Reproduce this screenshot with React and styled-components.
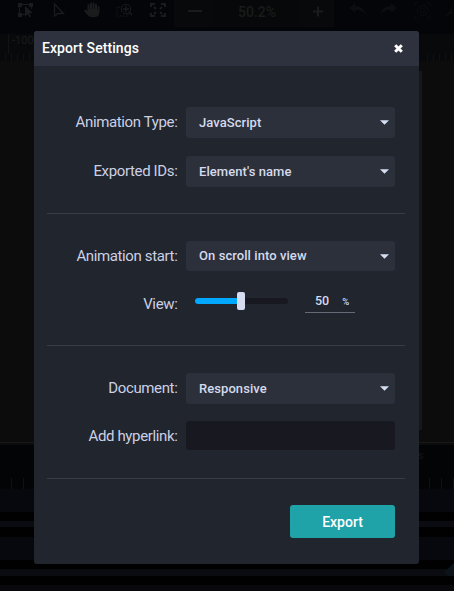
import React from "react";
import styled, { createGlobalStyle } from "styled-components";

const GlobalStyle = createGlobalStyle`
  * { box-sizing: border-box; }
  body { margin: 0; background: #000; font-family: Roboto, sans-serif; overflow: hidden; }
`;

const Screen = styled.div`
  position: relative;
  width: 454px;
  height: 591px;
  overflow: hidden;
  display: flex;
  flex-direction: column;
`;

const Toolbar = styled.div`
  height: 34px;
  flex: none;
  display: grid;
  grid-template-columns: 42px 33px 33px 33px 33px 38px 88px 34px 43px 22px 46px 9px;
  background: #040508;
  color: #1a1b1c;
`;

const Tool = styled.div`
  display: flex;
  justify-content: center;
  height: 27px;
  padding-top: ${(p) => p.$top ?? 2}px;
  padding-left: ${(p) => p.$left ?? 0}px;
  background: ${(p) => (p.$filled ? "#08090b" : "transparent")};
  color: ${(p) => (p.$faint ? "#0c0d0f" : "inherit")};
  svg { flex: none; }
`;

const ZoomValue = styled.div`
  height: 27px;
  padding-left: 26px;
  background: #070809;
  font-size: 14px;
  font-weight: 500;
  line-height: 24px;
`;

const Ruler = styled.div`
  height: 27px;
  flex: none;
  display: flex;
  justify-content: space-between;
  background: #08090b;
  color: #1a1b1d;
`;

const RulerStart = styled.div`
  width: 34px;
  height: 27px;
`;

const RulerValue = styled.div`
  height: 20px;
  margin-left: 8px;
  padding-left: 3px;
  border-left: 1px solid #121315;
  font-size: 11px;
  line-height: 14px;
`;

const Ticks = styled.div`
  width: ${(p) => p.$width}px;
  height: ${(p) => p.$height}px;
  margin-top: ${(p) => p.$top}px;
  background: repeating-linear-gradient(90deg, transparent 0 ${(p) => p.$step - 1}px, #101113 ${(p) => p.$step - 1}px ${(p) => p.$step}px);
`;

const Canvas = styled.div`
  height: 381px;
  flex: none;
  background: #0c0c0c;
  padding-top: 10px;
`;

const Artboard = styled.div`
  width: 388px;
  height: 359px;
  margin-left: 34px;
  background: #171717;
`;

const Timeline = styled.div`
  height: 47px;
  flex: none;
  display: flex;
  justify-content: space-between;
  border-top: 1px solid #181818;
  background: #030406;
  box-shadow: inset 0 2px #0b0c0c;
`;

const Seconds = styled.div`
  width: 36px;
  padding-top: 6px;
  color: #141517;
  font-size: 11px;
  line-height: 13px;
`;

const Track = styled.div`
  height: ${(p) => p.$height}px;
  flex: none;
  background: ${(p) => p.$color};
`;

const LastTrack = styled(Track)`
  display: flex;
  justify-content: flex-end;
  svg { margin-top: -6px; flex: none; }
`;

const Dialog = styled.section`
  position: absolute;
  left: 34px;
  top: 31px;
  width: 385px;
  height: 533px;
  border-radius: 3px;
  overflow: hidden;
  background: #21252d;
  color: #d5daed;
`;

const Header = styled.header`
  height: 35px;
  display: flex;
  align-items: center;
  justify-content: space-between;
  padding: 0 16px 0 8px;
  background: #2e323e;
  color: #fff;
`;

const Title = styled.h1`
  margin: 0;
  font-size: 14px;
  font-weight: 500;
  line-height: 35px;
  letter-spacing: 0.06px;
`;

const CloseButton = styled.button`
  display: flex;
  padding: 0;
  border: 0;
  background: none;
  color: #fff;
`;

const Group = styled.div`
  height: ${(p) => p.$height}px;
  margin: 0 14px 0 13px;
  padding-top: ${(p) => p.$top}px;
  border-bottom: 1px solid #393d4a;
`;

const Field = styled.div`
  display: grid;
  grid-template-columns: 131px 209px;
  column-gap: 8px;
  height: ${(p) => p.$height ?? 31}px;
  margin-bottom: ${(p) => p.$gap ?? 0}px;
`;

const Label = styled.label`
  padding-right: 0.6px;
  text-align: right;
  white-space: nowrap;
  font-size: 15px;
  font-weight: 400;
  line-height: 30px;
  letter-spacing: -0.37px;
  color: #cbd0e4;
`;

const Select = styled.div`
  display: flex;
  align-items: center;
  justify-content: space-between;
  padding: 0 6px 0 13px;
  border-radius: 3px;
  background: #2c303b;
  font-size: 13px;
  font-weight: 500;
  line-height: 30px;
  letter-spacing: 0.07px;
`;

const SliderLine = styled.div`
  display: flex;
  align-items: flex-start;
  padding-left: 9px;
`;

const SliderTrack = styled.div`
  display: flex;
  align-items: center;
  width: 93px;
  height: 6px;
  margin-top: 9px;
  border-radius: 3px;
  background: #181820;
`;

const SliderFill = styled.div`
  width: 42px;
  height: 6px;
  border-radius: 3px 0 0 3px;
  background: #00a8ff;
`;

const Thumb = styled.div`
  width: 8px;
  height: 18px;
  border-radius: 2px;
  background: #d5dcef;
`;

const Percent = styled.div`
  display: flex;
  width: 50px;
  height: 24px;
  margin-left: 17px;
  padding-left: 10px;
  border-bottom: 1px solid #656a77;
  font-size: 12.5px;
  font-weight: 500;
  line-height: 24px;
`;

const Unit = styled.span`
  margin-left: 13px;
  font-size: 9.5px;
  line-height: 25px;
`;

const LinkInput = styled.input`
  width: 209px;
  height: 29px;
  border: 0;
  border-radius: 3px;
  background: #181820;
`;

const Footer = styled.footer`
  display: flex;
  justify-content: flex-end;
  padding: 26px 24px 0 0;
`;

const ExportButton = styled.button`
  width: 105px;
  height: 33px;
  padding: 1px 0 0;
  border: 0;
  border-radius: 3px;
  background: #20a2a9;
  color: #fff;
  font: 500 14px/32px Roboto, sans-serif;
`;

const Caret = () => (
  <svg width="9" height="5" viewBox="0 0 9 5"><path d="M0 .3h9L4.5 4.7Z" fill="#d5dff4" /></svg>
);

const Dropdown = ({ label, value, gap, height }) => (
  <Field $gap={gap} $height={height}>
    <Label>{label}</Label>
    <Select>{value}<Caret /></Select>
  </Field>
);

const SelectionIcon = () => (
  <svg width="16" height="16" viewBox="0 0 16 16" fill="currentColor">
    <path d="M0 1h4v1h7V1h4v4h-1v2h-1V5h-2V3H4v2H2v6h2v1h3v1H4v2H0v-4h1V5H0Z" />
    <path d="m7 4 8 7-4 .3 2 3.2-1.5 1-2-3.5L7 14.5Z" />
  </svg>
);
const PointerIcon = () => (
  <svg width="16" height="18" viewBox="0 0 16 18" fill="none" stroke="currentColor" strokeWidth="1.3"><path d="m3.5 3 9 9.5H7L3.5 15Z" /></svg>
);
const HandIcon = () => (
  <svg width="16" height="16" viewBox="0 0 16 16" fill="currentColor">
    <path d="M3.5 9V3q0-1 1-1t1 1v4H6V1.5Q6 .5 7 .5t1 1V7h.5V1.5q0-1 1-1t1 1V7h.5V2.5q0-1 1-1t1 1V8h.5V5q0-1 1-1t1 1v5q0 5-5 5H7q-2 0-3.5-2L.3 9Q0 7.7 1 7.5t2.5 1.5Z" />
  </svg>
);
const ZoomIcon = () => (
  <svg width="17" height="16" viewBox="0 0 17 16" fill="none" stroke="currentColor">
    <path d="M4 4H1v9h11v-2" strokeDasharray="1.5 1.5" /><circle cx="10" cy="6" r="4.7" /><path d="M10 3v6M7 6h6m0 3 3 3" strokeWidth="1.4" />
  </svg>
);
const FitIcon = () => (
  <svg width="16" height="16" viewBox="0 0 16 16" fill="none" stroke="currentColor" strokeWidth="2">
    <path d="M1 5V2h4m6 0h4v3m0 6v3h-4m-6 0H1v-3" /><path d="m4 5 2 2m6-2-2 2m2 5-2-2m-6 2 2-2" />
  </svg>
);
const LineIcon = ({ plus }) => (
  <svg width="14" height="14" viewBox="0 0 14 14" stroke="currentColor" strokeWidth="2"><path d={plus ? "M2 7.5h10M7 2.5v10" : "M0 7h14"} /></svg>
);
const ArrowIcon = ({ redo }) => (
  <svg width="17" height="14" viewBox="0 0 17 14" fill="currentColor">
    <path d={redo ? "m17 5-6-5v3C4 3 1 7 1 12c2-4 5-5 10-5v3Z" : "m0 5 6-5v3c7 0 10 4 10 9-2-4-5-5-10-5v3Z"} />
  </svg>
);
const FocusIcon = () => (
  <svg width="17" height="17" viewBox="0 0 17 17" fill="none" stroke="currentColor">
    <path d="M1 4V1h3m9 0h3v3m0 9v3h-3m-9 0H1v-3" /><circle cx="8.5" cy="8.5" r="5" /><circle cx="8.5" cy="8.5" r="2" />
  </svg>
);
const EdgeIcon = () => (
  <svg width="7" height="14" viewBox="0 0 7 14" fill="none" stroke="currentColor" strokeWidth="1.5"><path d="m1 11 6-9M3 8h4" /></svg>
);

export default function App() {
  return (
    <>
      <GlobalStyle />
      <Screen>
        <Toolbar>
          <Tool $left={9}><SelectionIcon /></Tool>
          <Tool $top={1}><PointerIcon /></Tool>
          <Tool><HandIcon /></Tool>
          <Tool $top={3}><ZoomIcon /></Tool>
          <Tool><FitIcon /></Tool>
          <Tool $top={4} $left={3} $filled><LineIcon /></Tool>
          <ZoomValue>50.2%</ZoomValue>
          <Tool $top={4} $left={2} $filled><LineIcon plus /></Tool>
          <Tool $top={3} $left={4} $faint><ArrowIcon /></Tool>
          <Tool $top={3} $faint><ArrowIcon redo /></Tool>
          <Tool $faint><FocusIcon /></Tool>
          <Tool $top={5} $faint><EdgeIcon /></Tool>
        </Toolbar>
        <Ruler>
          <RulerStart>
            <RulerValue>-100</RulerValue>
            <Ticks $width={34} $height={7} $top={0} $step={6} />
          </RulerStart>
          <Ticks $width={32} $height={7} $top={20} $step={6} />
        </Ruler>
        <Canvas><Artboard /></Canvas>
        <Timeline>
          <Ticks $width={34} $height={11} $top={35} $step={12} />
          <Seconds>s<Ticks $width={36} $height={11} $top={16} $step={12} /></Seconds>
        </Timeline>
        <Track $height={23} $color="#07080d" />
        <Track $height={9} $color="#010101" />
        <Track $height={6} $color="#0b0c12" />
        <Track $height={10} $color="#010101" />
        <Track $height={23} $color="#07080d" />
        <Track $height={9} $color="#010101" />
        <LastTrack $height={7} $color="#0b0c12">
          <svg width="10" height="18"><path d="M0 9 10 0v18Z" fill="#0d1419" /></svg>
        </LastTrack>
        <Track $height={9} $color="#010101" />
        <Track $height={6} $color="#08080d" />

        <Dialog role="dialog" aria-label="Export Settings">
          <Header>
            <Title>Export Settings</Title>
            <CloseButton aria-label="Close">
              <svg width="9" height="9" viewBox="0 0 9 9"><path d="m1.2 1.2 6.6 6.6m0-6.6L1.2 7.8" stroke="currentColor" strokeWidth="3" /></svg>
            </CloseButton>
          </Header>
          <Group $height={148} $top={41}>
            <Dropdown label="Animation Type:" value="JavaScript" gap={18} />
            <Dropdown label="Exported IDs:" value="Element's name" />
          </Group>
          <Group $height={132} $top={27}>
            <Dropdown label="Animation start:" value="On scroll into view" height={30} gap={18} />
            <Field $height={30}>
              <Label>View:</Label>
              <SliderLine>
                <SliderTrack><SliderFill /><Thumb /></SliderTrack>
                <Percent>50<Unit>%</Unit></Percent>
              </SliderLine>
            </Field>
          </Group>
          <Group $height={133} $top={27}>
            <Dropdown label="Document:" value="Responsive" gap={17} />
            <Field $height={29}>
              <Label>Add hyperlink:</Label>
              <LinkInput aria-label="Add hyperlink" />
            </Field>
          </Group>
          <Footer><ExportButton>Export</ExportButton></Footer>
        </Dialog>
      </Screen>
    </>
  );
}
